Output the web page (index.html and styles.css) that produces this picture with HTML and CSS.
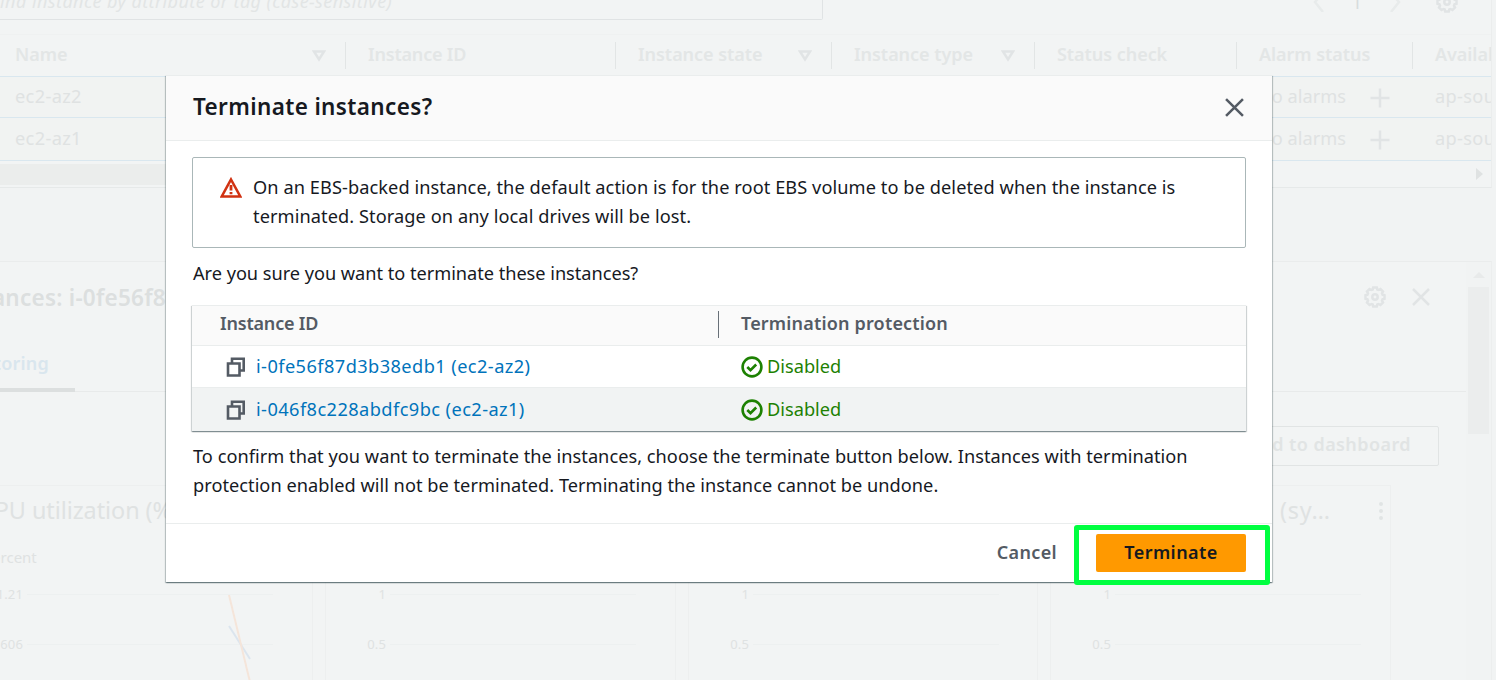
FILE: index.html
```html
<!DOCTYPE html>
<html lang="en">
<head>
<meta charset="utf-8">
<title>Terminate instances</title>
<link rel="stylesheet" href="styles.css">
</head>
<body>
<svg class="defs" width="0" height="0">
  <symbol id="gear" viewBox="0 0 22 22"><path d="M9.200 1.500h3.600l.5 2 1.300.5 1.900-1 2.500 2.500-1 1.900.5 1.300 2 .5v3.600l-2 .5-.5 1.300 1 1.900-2.500 2.500-1.900-1-1.300.5-.5 2H9.200l-.5-2-1.300-.5-1.900 1L3 16.500l1-1.900-.5-1.300-2-.5V9.200l2-.5L4 7.400 3 5.500 5.500 3l1.900 1 1.300-.5z"/><circle cx="11" cy="11" r="2.700"/></symbol>
  <symbol id="cross" viewBox="0 0 18 18"><path d="M1 1l16 16M17 1L1 17"/></symbol>
  <symbol id="plus" viewBox="0 0 20 20"><path d="M10 .5v19M.5 10h19"/></symbol>
  <symbol id="sort" viewBox="0 0 14 12"><path d="M2 1.500h10L7 9.500z"/></symbol>
  <symbol id="copy" viewBox="0 0 20 20"><path d="M2 6.500h11.500v12H2zM6 6V1.800h11.700v11.700h-4"/></symbol>
  <symbol id="check" viewBox="0 0 22 22"><circle cx="11" cy="11" r="9.400"/><path d="M6.300 11l3.200 3.200 5.700-5.700"/></symbol>
</svg>

<main class="console">
  <section class="instances">
    <div class="toolbar">
      <div class="search">Find instance by attribute or tag (case-sensitive)</div>
      <div class="pager">
        <svg class="chev" viewBox="0 0 12 20"><path d="M10 1L2 10l8 10"/></svg>
        <span class="page">1</span>
        <svg class="chev" viewBox="0 0 12 20"><path d="M2 1l8 9-8 10"/></svg>
        <svg class="gear"><use href="#gear"/></svg>
      </div>
    </div>
    <div class="grid head">
      <div>Name<svg class="sort"><use href="#sort"/></svg></div>
      <div class="id">Instance ID</div>
      <div>Instance state<svg class="sort"><use href="#sort"/></svg></div>
      <div>Instance type<svg class="sort"><use href="#sort"/></svg></div>
      <div>Status check</div>
      <div>Alarm status</div>
      <div>Availability Zone</div>
    </div>
    <div class="grid row">
      <div>ec2-az2</div><div></div><div></div><div></div><div></div>
      <div class="alarm">No alarms<svg class="plus"><use href="#plus"/></svg></div>
      <div>ap-south-1a</div>
    </div>
    <div class="grid row second">
      <div>ec2-az1</div><div></div><div></div><div></div><div></div>
      <div class="alarm">No alarms<svg class="plus"><use href="#plus"/></svg></div>
      <div>ap-south-1a</div>
    </div>
    <div class="hscroll"><span class="thumb"></span><span class="arrow"></span></div>
  </section>

  <section class="details">
    <div class="panel">
      <div class="panel-head">
        <h2>Instances: i-0fe56f87d3b38edb1</h2>
        <div class="tools"><svg class="gear"><use href="#gear"/></svg><svg class="cross"><use href="#cross"/></svg></div>
      </div>
      <div class="tabs"><span>Monitoring</span></div>
      <div class="actions"><span class="dash">Add to dashboard</span></div>
      <div class="charts">
        <article class="card first">
          <h3><span class="pull">CPU utilization (%)</span></h3>
          <p><span class="pull-sm">Percent</span></p>
          <div class="tick"><span>1.21</span><i></i></div>
          <div class="tick"><span>.606</span><i></i></div>
          <svg class="series" viewBox="0 0 24 88"><path class="blue" d="M1 32l21 33"/><path class="orange" d="M1 1l21 87"/></svg>
        </article>
        <article class="card"><h3></h3><p></p><div class="tick"><span>1</span><i></i></div><div class="tick"><span>0.5</span><i></i></div></article>
        <article class="card"><h3></h3><p></p><div class="tick"><span>1</span><i></i></div><div class="tick"><span>0.5</span><i></i></div></article>
        <article class="card last">
          <h3><span class="sys">(sy…</span><svg class="dots" viewBox="0 0 6 20"><circle cx="3" cy="3" r="2"/><circle cx="3" cy="10" r="2"/><circle cx="3" cy="17" r="2"/></svg></h3>
          <p></p><div class="tick"><span>1</span><i></i></div><div class="tick"><span>0.5</span><i></i></div>
        </article>
      </div>
    </div>
    <div class="vscroll"><span class="up"></span><span class="bar"></span></div>
  </section>
</main>

<div class="modal" role="dialog">
  <header><h1>Terminate instances?</h1><svg class="cross"><use href="#cross"/></svg></header>
  <div class="body">
    <div class="alert">
      <svg class="warn" viewBox="0 0 22 21"><path d="M11 2.500L20.300 19.500H1.700z"/><path class="mark" d="M11 8v5.500M11 15v2.300"/></svg>
      <p><span class="l1">On an EBS-backed instance, the default action is for the root EBS volume to be deleted when the instance is</span><br><span class="l1">terminated. Storage on any local drives will be lost.</span></p>
    </div>
    <p class="ask">Are you sure you want to terminate these instances?</p>
    <div class="table">
      <div class="tr th"><div class="c1">Instance ID</div><div class="c2">Termination protection</div></div>
      <div class="tr"><div class="c1"><svg class="copy"><use href="#copy"/></svg><a>i-0fe56f87d3b38edb1 (ec2-az2)</a></div><div class="c2 ok"><svg class="check"><use href="#check"/></svg>Disabled</div></div>
      <div class="tr alt"><div class="c1"><svg class="copy"><use href="#copy"/></svg><a>i-046f8c228abdfc9bc (ec2-az1)</a></div><div class="c2 ok"><svg class="check"><use href="#check"/></svg>Disabled</div></div>
    </div>
    <p class="confirm">To confirm that you want to terminate the instances, choose the terminate button below. Instances with termination<br>protection enabled will not be terminated. Terminating the instance cannot be undone.</p>
  </div>
  <footer><button class="cancel">Cancel</button><button class="primary">Terminate</button></footer>
  <div class="highlight"></div>
</div>
</body>
</html>
```
FILE: styles.css
```css
* { box-sizing: border-box; }
body { margin: 0; width: 1496px; height: 680px; overflow: hidden; position: relative; background: #f1f3f3; font-family: "Noto Sans", sans-serif; font-size: 18.2px; line-height: 29px; color: #16191f; }
h1, h2, h3, p { margin: 0; }
svg { fill: none; flex: none; display: block; }
.defs { position: absolute; }

/* Dimmed console page */
.console { width: 1496px; height: 680px; overflow: hidden; color: #dfe2e2; display: flex; flex-direction: column; }
.console svg { stroke: #e1e4e5; stroke-width: 2.5; }
.instances { width: 1492px; height: 188px; flex: none; background: #f2f4f4; border-right: 1px solid #ebeded; border-bottom: 1px solid #e6e9e9; overflow: hidden; }
.toolbar { height: 35px; border-bottom: 1px solid #eff1f1; display: flex; justify-content: space-between; align-items: flex-start; }
.search { width: 824px; height: 40px; margin: -20px 0 0 -1px; border: 1px solid #e0e3e4; border-left: 0; border-radius: 0 2px 2px 0; line-height: 40px; font-size: 18px; font-style: italic; color: #e2e5e5; letter-spacing: .43px; text-indent: -8px; white-space: nowrap; }
.pager { display: flex; align-items: center; height: 22px; margin-top: -9px; padding-right: 33px; }
.pager .chev { width: 12px; height: 20px; stroke: #e8ebeb; }
.page { width: 64px; text-align: center; color: #d8dcdd; }
.pager .gear { margin-left: 35px; }
.gear { width: 22px; height: 22px; }
.grid { display: grid; grid-template-columns: 346px 270px 216px 203px 202px 176px 300px; white-space: nowrap; }
.grid > div { display: flex; align-items: center; padding-left: 22px; }
.grid > div:first-child { padding-left: 15px; }
.head { height: 41px; font-weight: 600; font-size: 18px; color: #e3e6e6; }
.head > div { height: 27px; margin-top: 7px; border-right: 1px solid #e2e5e5; justify-content: space-between; padding-right: 19px; padding-bottom: 2px; letter-spacing: -.05px; }
.head .id { letter-spacing: -.2px; }
.sort { width: 14px; height: 12px; margin-top: 3px; }
.row { height: 41px; border-top: 1px solid #d9e7ef; background: #f1f3f2; }
.row > div { letter-spacing: .35px; padding-bottom: 1px; }
.row.second { height: 44px; border-bottom: 1px solid #d9e7ef; }
.alarm { gap: 24px; }
.row > div.alarm { letter-spacing: 0; padding-left: 21px; }
.plus { width: 20px; height: 20px; margin-top: 2px; }
.hscroll { height: 25px; padding: 3px 8px 2px 0; display: flex; justify-content: space-between; align-items: center; }
.hscroll .thumb { width: 900px; height: 21px; background: #ebedec; }
.arrow { border: 6px solid transparent; border-left: 7px solid #dfe2e2; border-right: 0; }

.details { margin-top: 73px; width: 1492px; height: 419px; flex: none; display: flex; border-top: 1px solid #eaecec; border-right: 1px solid #eceeee; background: #f2f4f4; }
.panel { width: 1466px; height: 418px; overflow: hidden; }
.panel-head { height: 70px; display: flex; justify-content: space-between; align-items: center; padding-right: 36px; }
.panel-head h2 { font-size: 22.5px; font-weight: 600; white-space: nowrap; margin-left: -52px; color: #dcdfdf; letter-spacing: .25px; }
.tools { display: flex; gap: 26px; align-items: center; }
.tools .cross { width: 18px; height: 18px; }
.tabs { height: 60px; border-bottom: 1px solid #e8eaea; }
.tabs span { width: 75px; height: 60px; border-bottom: 4px solid #dcdfdf; line-height: 62px; font-size: 18px; font-weight: 600; color: #d9e6ee; display: flex; justify-content: flex-end; padding-right: 26px; letter-spacing: .2px; }
.actions { height: 93px; padding: 34px 27px 0 0; display: flex; justify-content: flex-end; }
.dash { width: 220px; height: 40px; border: 1px solid #e1e4e4; border-radius: 2px; text-align: right; padding-right: 27px; line-height: 35px; font-size: 18px; font-weight: 600; letter-spacing: .42px; color: #e1e4e4; }
.charts { display: grid; grid-template-columns: 313px 351px 350px 341px; gap: 12px; height: 200px; }
.card { border: 1px solid #edefef; border-bottom: 0; position: relative; }
.card.first { border-left: 0; }
.card h3 { height: 49px; display: flex; align-items: center; font-size: 23.4px; font-weight: 400; white-space: nowrap; letter-spacing: -.05px; }
.pull { margin-left: -20px; }
.card p { height: 44px; line-height: 44px; font-size: 15px; }
.pull-sm { margin-left: -17px; }
.tick { height: 50px; margin-top: -10px; margin-bottom: 10px; line-height: 50px; font-size: 13px; display: flex; align-items: center; gap: 4px; }
.tick + .tick { margin-top: -10px; }
.tick span { width: 60px; text-align: right; flex: none; letter-spacing: .15px; }
.tick i { width: 246px; border-top: 1px solid #edf0f0; }
.first .tick span { width: 23px; display: flex; justify-content: flex-end; }
.series { position: absolute; left: 228px; top: 108px; width: 24px; height: 88px; }
.console .series .blue { stroke: #dce5ee; stroke-width: 2; }
.console .series .orange { stroke: #f5e5da; stroke-width: 2; }
.last h3 { justify-content: space-between; padding: 0 6px 0 229px; }
.sys { letter-spacing: .8px; }
.dots { width: 6px; height: 20px; }
.console .dots { fill: #e1e4e4; stroke: none; }
.vscroll { width: 25px; height: 418px; background: #f1f3f3; display: flex; flex-direction: column; align-items: center; padding-top: 10px; }
.up { border: 6px solid transparent; border-bottom: 6px solid #e8eaea; border-top: 0; }
.bar { width: 21px; height: 147px; margin-top: 9px; background: #ebeded; }

/* Confirmation dialog */
.modal { position: absolute; left: 166px; top: 75px; width: 1106px; height: 507px; background: #fff; border-top: 1px solid #eaeded; box-shadow: 0 1px 1px 0 rgba(0,28,36,.3), 1px 1px 1px 0 rgba(0,28,36,.2), -1px 1px 1px 0 rgba(0,28,36,.2); }
.modal header { height: 65px; background: #fafafa; border-bottom: 1px solid #eaeded; display: flex; justify-content: space-between; align-items: center; padding: 0 28px 2px 27px; }
.modal h1 { font-size: 22.5px; font-weight: 600; letter-spacing: .36px; margin-top: -2px; }
.modal .cross { width: 19px; height: 19px; stroke: #545b64; stroke-width: 2.400; }
.body { height: 382px; padding: 16px 26px 0; }
.body p { white-space: nowrap; }
.alert { height: 91px; border: 1px solid #aab7b8; border-radius: 2px; padding: 15px 27px; display: flex; gap: 11px; }
.warn { width: 22px; height: 21px; margin-top: 4px; stroke: #d13212; stroke-width: 2.600; }
.warn .mark { stroke-width: 2.800; }
.l1 { letter-spacing: .078px; }
.ask { margin: 11px 0 0 1px; letter-spacing: -.03px; }
.table { margin: 17px -1px 0 0; height: 126px; border-top: 1px solid #eaeded; box-shadow: 0 1px 1px 0 rgba(0,28,36,.3), 1px 1px 1px 0 rgba(0,28,36,.15), -1px 1px 1px 0 rgba(0,28,36,.15); width: 1054px; }
.tr { height: 42px; display: grid; grid-template-columns: 527px 1fr; align-items: center; border-bottom: 1px solid #eaeded; }
.tr.alt { height: 43px; background: #f1f3f3; border: 0; }
.tr.th { height: 40px; background: #fafafa; font-weight: 600; font-size: 18px; color: #545b64; }
.tr.th .c1 { height: 27px; line-height: 26px; margin-top: -2px; padding: 0 0 3px 28px; border-right: 1px solid #687078; letter-spacing: -.2px; }
.tr.th .c2 { height: 27px; line-height: 26px; margin-top: -2px; padding-bottom: 3px; letter-spacing: .18px; }
.c1 { display: flex; padding-left: 34px; align-items: center; gap: 10px; letter-spacing: .43px; }
.c2 { display: flex; padding-left: 22px; align-items: center; gap: 4px; }
.copy { width: 20px; height: 20px; stroke: #545b64; stroke-width: 2.600; }
a { color: #0073bb; }
.ok { color: #1d8102; }
.check { width: 22px; height: 22px; stroke: #1d8102; stroke-width: 2.600; }
.confirm { margin: 11px 0 0 1px; letter-spacing: .027px; }
footer { height: 59px; border-top: 1px solid #eaeded; display: flex; justify-content: flex-end; align-items: center; padding: 0 26px 1px; gap: 39px; }
button { border: 0; padding: 0 0 2px; font: 600 18px/36px "Noto Sans", sans-serif; letter-spacing: .35px; background: none; color: #545b64; }
.primary { width: 150px; height: 38px; border-radius: 2px; background: #ff9900; color: #16191f; letter-spacing: .42px; }
.highlight { position: absolute; left: 908px; top: 449px; width: 196px; height: 60px; border: 5px solid #00ff40; border-radius: 3px; }
```
